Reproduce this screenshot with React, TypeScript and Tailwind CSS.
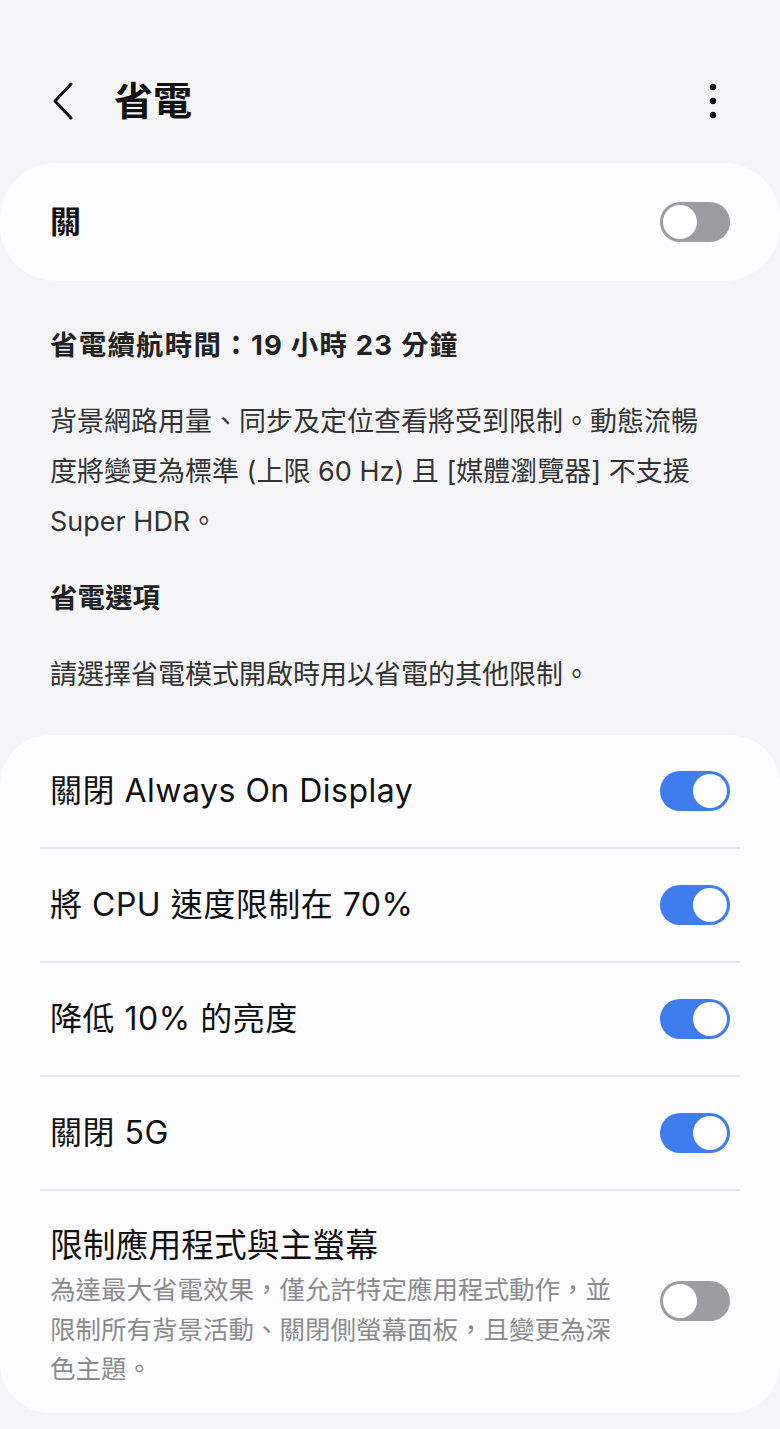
import React from 'react';

const font = { fontFamily: 'Inter, "Noto Sans CJK TC", sans-serif' };

function Toggle({ on, className = '' }: { on: boolean; className?: string }) {
  return (
    <div
      className={`flex h-[40px] w-[70px] shrink-0 items-center rounded-full p-[3px] ${
        on ? 'justify-end bg-[#3e7cf0]' : 'justify-start bg-[#9d9da1]'
      } ${className}`}
    >
      <div className="h-[34px] w-[34px] rounded-full bg-white" />
    </div>
  );
}

interface Row {
  title: string;
  on: boolean;
  desc?: string;
}

const rows: Row[] = [
  { title: '關閉 Always On Display', on: true },
  { title: '將 CPU 速度限制在 70%', on: true },
  { title: '降低 10% 的亮度', on: true },
  { title: '關閉 5G', on: true },
  {
    title: '限制應用程式與主螢幕',
    on: false,
    desc: '為達最大省電效果，僅允許特定應用程式動作，並限制所有背景活動、關閉側螢幕面板，且變更為深色主題。',
  },
];

export default function App() {
  return (
    <div className="min-h-[1429px] w-[780px] bg-[#f5f5f7] text-[#111]" style={font}>
      {/* header */}
      <div className="flex h-[163px] items-center pl-[50px] pr-[62px] pt-[38px]">
        <svg width="26" height="40" viewBox="0 0 26 40" className="mr-[38px]">
          <path d="M21 3 L5 20 L21 37" fill="none" stroke="#111" strokeWidth="3" strokeLinecap="round" strokeLinejoin="round" />
        </svg>
        <h1 className="flex-1 text-[39px] font-bold leading-[48px]">省電</h1>
        <svg width="10" height="36" viewBox="0 0 10 36">
          <circle cx="5" cy="4" r="3.2" fill="#111" />
          <circle cx="5" cy="18" r="3.2" fill="#111" />
          <circle cx="5" cy="32" r="3.2" fill="#111" />
        </svg>
      </div>

      {/* master switch */}
      <div className="flex h-[118px] items-center justify-between rounded-[56px] bg-[#fcfcfe] px-[50px]">
        <span className="text-[31px] font-bold">關</span>
        <Toggle on={false} />
      </div>

      {/* info */}
      <div className="pl-[50px] pr-[60px] pt-[46px] pb-[35px] text-[#222]">
        <h2 className="text-[27.5px] font-bold leading-[36px] tracking-[1.2px]">省電續航時間：19 小時 23 分鐘</h2>
        <p className="mt-[34px] text-[27px] leading-[50px] text-[#333]">
          背景網路用量、同步及定位查看將受到限制。動態流暢度將變更為標準 (上限 60 Hz) 且 [媒體瀏覽器] 不支援 Super HDR。
        </p>
        <h2 className="mt-[33px] text-[27.5px] font-bold leading-[36px]">省電選項</h2>
        <p className="mt-[34px] text-[27px] leading-[50px] text-[#333]">請選擇省電模式開啟時用以省電的其他限制。</p>
      </div>

      {/* options */}
      <div className="rounded-[50px] bg-[#fcfcfe]">
        {rows.map((r, i) => (
          <div key={i}>
            {i > 0 && <div className="mx-[40px] h-[2px] bg-[#e6e6e8]" />}
            {r.desc ? (
              <div className="flex items-start gap-[40px] pb-[24px] pl-[50px] pr-[50px] pt-[34px]">
                <div className="flex-1">
                  <div className="text-[32.8px] leading-[40px]">{r.title}</div>
                  <p className="mt-[5px] text-[25.5px] leading-[39.5px] text-[#8b8b8d]">{r.desc}</p>
                </div>
                <Toggle on={r.on} className="mt-[56px]" />
              </div>
            ) : (
              <div className="flex h-[112px] items-center justify-between px-[50px]">
                <span className="text-[32px] tracking-[0.5px]">{r.title}</span>
                <Toggle on={r.on} />
              </div>
            )}
          </div>
        ))}
      </div>
    </div>
  );
}
